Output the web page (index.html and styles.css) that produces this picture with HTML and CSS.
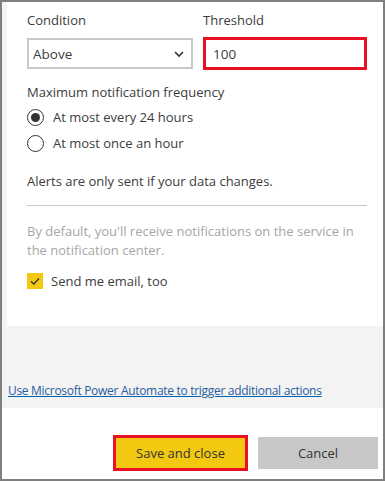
FILE: index.html
```html
<!DOCTYPE html>
<html>
<head>
<meta charset="utf-8">
<link rel="stylesheet" href="styles.css">
</head>
<body>
<div class="frame">
  <div class="body-area">
    <div class="panel">
      <div class="fields">
        <div class="field field-condition">
          <div class="label">Condition</div>
          <div class="select">
            <span>Above</span>
            <svg class="chev" width="12" height="8" viewBox="0 0 12 8"><path d="M2 2 L6 6 L10 2" fill="none" stroke="#333" stroke-width="1.6"/></svg>
          </div>
        </div>
        <div class="field field-threshold">
          <div class="label">Threshold</div>
          <div class="input">100</div>
        </div>
      </div>
      <div class="label freq">Maximum notification frequency</div>
      <div class="radio-row">
        <span class="radio checked"><span class="dot"></span></span>
        <span class="text">At most every 24 hours</span>
      </div>
      <div class="radio-row">
        <span class="radio"></span>
        <span class="text">At most once an hour</span>
      </div>
      <div class="label note">Alerts are only sent if your data changes.</div>
      <div class="divider"></div>
      <div class="muted">By default, you'll receive notifications on the service in the notification center.</div>
      <div class="check-row">
        <span class="checkbox">
          <svg width="16" height="16" viewBox="0 0 16 16"><path d="M4 8.2 L6.8 11 L12 5.5" fill="none" stroke="#333" stroke-width="1.3"/></svg>
        </span>
        <span class="text">Send me email, too</span>
      </div>
    </div>
    <div class="link-area">
      <a class="link" href="#">Use Microsoft Power Automate to trigger additional actions</a>
    </div>
  </div>
  <div class="footer">
    <button class="btn btn-primary">Save and close</button>
    <button class="btn btn-secondary">Cancel</button>
  </div>
</div>
</body>
</html>
```

FILE: styles.css
```css
* { box-sizing: border-box; }
html, body { margin: 0; padding: 0; background: #fff; }
body { font-family: "Open Sans", "Noto Sans", sans-serif; font-size: 13px; color: #3c3c3c; }
.frame {
  width: 385px;
  height: 481px;
  border: 2px solid #7f7f7f;
  display: flex;
  flex-direction: column;
  background: #fff;
}
.body-area {
  background: #f3f3f3;
  padding-left: 5px;
  display: flex;
  flex-direction: column;
  height: 406px;
}
.panel {
  background: #fff;
  height: 324px;
  padding: 8px 16px 0 20px;
}
.fields { display: flex; gap: 10px; }
.field-condition { width: 166px; }
.field-threshold { width: 164px; }
.label { line-height: 20px; }
.select {
  margin-top: 8px;
  height: 31px;
  border: 2px solid #c8c8c8;
  display: flex;
  align-items: center;
  justify-content: space-between;
  padding: 0 6px 0 4px;
  font-size: 13.5px;
}
.chev { display: block; }
.input {
  margin-top: 7px;
  height: 33px;
  border: 3px solid #e81123;
  display: flex;
  align-items: center;
  padding-left: 7px;
  font-size: 13.5px;
}
.freq { margin-top: 12px; }
.freq + .radio-row { margin-top: 2px; }
.radio-row { display: flex; align-items: center; height: 26px; gap: 9px; }
.radio {
  width: 17px; height: 17px;
  border: 1px solid #333;
  border-radius: 50%;
  display: flex; align-items: center; justify-content: center;
  flex: none;
}
.radio .dot { width: 9px; height: 9px; border-radius: 50%; background: #333; }
.note { margin-top: 15px; }
.divider { height: 1px; background: #c8c8c8; margin-top: 14px; width: 340px; }
.muted { color: #a6a6a6; line-height: 19px; margin-top: 16px; }
.check-row { display: flex; align-items: center; height: 20px; margin-top: 11px; gap: 8px; }
.checkbox {
  width: 16px; height: 16px; background: #f2c811; flex: none;
  display: flex;
}
.link-area { padding: 55px 0 0 1px; }
.link {
  color: #2a5d9c;
  text-decoration: underline;
  text-decoration-color: #0063b1;
  line-height: 18px;
  font-size: 12px;
  letter-spacing: -0.3px;
}
.footer {
  flex: 1;
  display: flex;
  justify-content: flex-end;
  align-items: center;
  gap: 10px;
  padding: 18px 5px 0 0;
}
.btn {
  font-family: inherit;
  font-size: 13px;
  color: #333;
  border: none;
  cursor: pointer;
}
.btn-primary {
  width: 135px; height: 36px;
  background: #f2c811;
  border: 3px solid #e81123;
}
.btn-secondary {
  width: 120px; height: 32px;
  background: #c8c8c8;
}
```
